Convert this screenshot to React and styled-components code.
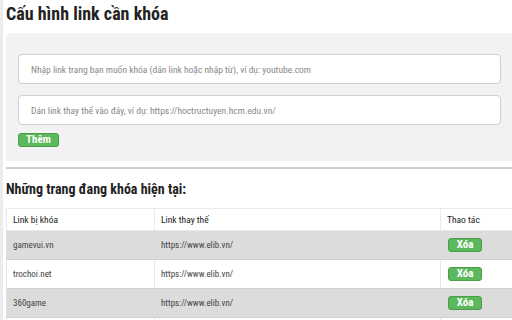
import * as React from "react";
import styled, { createGlobalStyle } from "styled-components";

const font = `"Roboto Condensed", "Liberation Sans", Arial, sans-serif`;

const GlobalStyle = createGlobalStyle`
  html, body {
    margin: 0;
    padding: 0;
    background: #fff;
    font-family: ${font};
    overflow: hidden;
  }
`;

const Page = styled.div`
  width: 509px;
  height: 320px;
  border-left: 3px solid #ececec;
  padding-left: 3px;
  overflow: hidden;
`;

const Title = styled.h1`
  margin: 0;
  padding-top: 3px;
  height: 30px;
  font-size: 18px;
  line-height: 22px;
  font-weight: bold;
  color: #222;
`;

const Panel = styled.section`
  background: #f2f2f2;
  border-top-left-radius: 6px;
  padding: 21px 0 14px 12px;
  margin-right: -10px;
  display: flex;
  flex-direction: column;
  align-items: flex-start;
  gap: 11px;
`;

const Input = styled.input`
  box-sizing: border-box;
  width: 483px;
  height: 30px;
  border: 1px solid #cfcfcf;
  border-radius: 4px;
  background: #fff;
  padding: 0 12px;
  font-family: ${font};
  font-size: 9.5px;
  color: #555;
  outline: none;

  &::placeholder {
    color: #888;
  }
`;

const GreenButton = styled.button`
  box-sizing: border-box;
  display: block;
  width: ${(p) => p.$w}px;
  height: 14px;
  padding: 0;
  border: 1px solid #4a9e45;
  border-radius: 3px;
  background: #5cb85c;
  color: #fff;
  font-family: ${font};
  font-size: 11px;
  font-weight: bold;
  line-height: 12px;
  cursor: pointer;
`;

const AddButton = styled(GreenButton)`
  margin-top: -3px;
`;

const Divider = styled.hr`
  margin: 6px 0 0;
  border: 0;
  border-top: 2px solid #cfcfcf;
`;

const Subtitle = styled.h2`
  margin: 0;
  padding: 12px 0 10px;
  font-size: 14px;
  line-height: 17px;
  font-weight: bold;
  color: #222;
`;

const Table = styled.table`
  border-collapse: collapse;
  width: 524px;
  font-size: 9px;
  color: #333;
  table-layout: fixed;
`;

const Th = styled.th`
  box-sizing: border-box;
  text-align: left;
  font-weight: normal;
  font-size: 9.5px;
  color: #222;
  height: 22px;
  padding: 0 0 0 6px;
  border: 1px solid #eaeaea;
  width: ${(p) => p.$w}px;
`;

const Row = styled.tr`
  background: ${(p) => (p.$alt ? "#dcdcdc" : "#fff")};
`;

const Td = styled.td`
  height: 28px;
  padding: 0 0 0 6px;
  border-top: 1px solid #d0d0d0;
  border-left: 1px solid ${(p) => (p.$alt ? "#dcdcdc" : "#e6e6e6")};
  color: #444;
`;

const ActionCell = styled(Td)`
  padding-left: 7px;
`;

const rows = [
  { blocked: "gamevui.vn", replace: "https://www.elib.vn/" },
  { blocked: "trochoi.net", replace: "https://www.elib.vn/" },
  { blocked: "360game", replace: "https://www.elib.vn/" },
];

export default function App() {
  return (
    <Page>
      <GlobalStyle />
      <Title>Cấu hình link cần khóa</Title>
      <Panel>
        <Input placeholder="Nhập link trang bạn muốn khóa (dán link hoặc nhập từ), ví dụ: youtube.com" />
        <Input placeholder="Dán link thay thế vào đây, ví dụ: https://hoctructuyen.hcm.edu.vn/" />
        <AddButton $w={41}>Thêm</AddButton>
      </Panel>
      <Divider />
      <Subtitle>Những trang đang khóa hiện tại:</Subtitle>
      <Table>
        <thead>
          <tr>
            <Th $w={148}>Link bị khóa</Th>
            <Th $w={286}>Link thay thế</Th>
            <Th $w={90}>Thao tác</Th>
          </tr>
        </thead>
        <tbody>
          {rows.map((r, i) => (
            <Row key={r.blocked} $alt={i % 2 === 0}>
              <Td $alt={i % 2 === 0}>{r.blocked}</Td>
              <Td $alt={i % 2 === 0}>{r.replace}</Td>
              <ActionCell $alt={i % 2 === 0}>
                <GreenButton $w={34}>Xóa</GreenButton>
              </ActionCell>
            </Row>
          ))}
          <Row>
            <Td />
            <Td />
            <Td />
          </Row>
        </tbody>
      </Table>
    </Page>
  );
}
